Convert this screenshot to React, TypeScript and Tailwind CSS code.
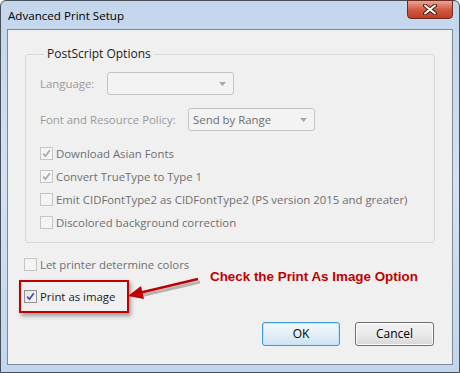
import React from 'react';

const ui = { fontFamily: '"Open Sans", "Noto Sans", sans-serif' };

function Check({ checked, disabled }: { checked?: boolean; disabled?: boolean }) {
  return (
    <div
      className={`w-[13px] h-[13px] border flex items-center justify-center shrink-0 ${
        disabled ? 'border-[#c6c6c6] bg-[#f4f4f4]' : 'border-[#8f8f8f] bg-gradient-to-br from-[#e2e2e2] to-[#fbfbfb]'
      }`}
    >
      {checked && (
        <svg width="9" height="9" viewBox="0 0 9 9">
          <path
            d="M1.2 4.6 L3.4 7.2 L7.8 1.2"
            fill="none"
            stroke={disabled ? '#a9a9a9' : '#3b4fa8'}
            strokeWidth="1.7"
          />
        </svg>
      )}
    </div>
  );
}

function Row({ label, checked, disabled }: { label: string; checked?: boolean; disabled?: boolean }) {
  return (
    <div className="h-[23px] flex items-center gap-[3px] whitespace-nowrap">
      <Check checked={checked} disabled={disabled} />
      <span className={`text-[11.4px] ${disabled ? 'text-[#6f6f6f]' : 'text-[#1b1b1b]'}`}>{label}</span>
    </div>
  );
}

function Select({ value }: { value?: string }) {
  return (
    <div className="w-[127px] h-[23px] border border-[#c4c4c4] rounded-[3px] bg-[#f3f3f3] flex items-center justify-between pl-[4px] pr-[7px]">
      <span className="text-[11.4px] text-[#6d6d6d]">{value}</span>
      <svg width="7" height="4" viewBox="0 0 7 4">
        <path d="M0 0 H7 L3.5 4 Z" fill="#a8a8a8" />
      </svg>
    </div>
  );
}

export default function App() {
  return (
    <div className="w-[460px] h-[373px] bg-white relative overflow-hidden" style={ui}>
      {/* window frame */}
      <div className="w-full h-full rounded-t-[6px] border border-[#474f5a] bg-gradient-to-b from-[#c3d6ec] via-[#d3e1f1] to-[#c2d6ee] flex flex-col px-[6px] pb-[7px]">
        {/* title bar */}
        <div className="h-[28px] flex items-start justify-between">
          <span className="text-[11.6px] text-black mt-[6px] ml-[1px]">Advanced Print Setup</span>
          <div className="w-[46px] h-[19px] mt-[-1px] rounded-b-[4px] border border-[#6b2c22] bg-gradient-to-b from-[#e9a595] via-[#d35a43] to-[#c33b22] flex items-center justify-center">
            <svg width="14" height="11" viewBox="0 0 14 11">
              <path d="M2 1.5 L12 9.5 M12 1.5 L2 9.5" stroke="#4a1b12" strokeWidth="4" strokeLinecap="round" />
              <path d="M2 1.5 L12 9.5 M12 1.5 L2 9.5" stroke="#ffffff" strokeWidth="2" strokeLinecap="round" />
            </svg>
          </div>
        </div>

        {/* client area */}
        <div className="flex-1 border border-[#7d8a99] bg-[#f0f0f0] flex flex-col px-[17px] pt-[15px]">
          <fieldset className="border border-[#d5dadf] rounded-[3px] px-[14px] pb-[8px]">
            <legend className="ml-[4px] px-[3px] text-[12px] text-[#1b1b1b]">PostScript Options</legend>
            <div className="flex items-center mt-[9px]">
              <span className="w-[67px] text-[11.4px] text-[#9a9a9a]">Language:</span>
              <Select />
            </div>
            <div className="flex items-center mt-[13px]">
              <span className="w-[148px] text-[11.4px] text-[#9a9a9a]">Font and Resource Policy:</span>
              <Select value="Send by Range" />
            </div>
            <div className="flex flex-col mt-[11px]">
              <Row label="Download Asian Fonts" checked disabled />
              <Row label="Convert TrueType to Type 1" checked disabled />
              <Row label="Emit CIDFontType2 as CIDFontType2 (PS version 2015 and greater)" disabled />
              <Row label="Discolored background correction" disabled />
            </div>
          </fieldset>

          <div className="flex flex-col mt-[10px] ml-[-1px]">
            <Row label="Let printer determine colors" disabled />
            <div className="h-[9px]" />
            <Row label="Print as image" checked />
          </div>

          <div className="flex justify-end gap-[15px] mt-[14px] mr-[1px]">
            <button className="w-[78px] h-[24px] rounded-[3px] border border-[#3c9bd6] bg-gradient-to-b from-[#f2f9fd] via-[#e4eff7] to-[#cfe3f1] text-[12px] text-black shadow-[inset_0_0_0_1px_#bfe3f8]">
              OK
            </button>
            <button className="w-[79px] h-[24px] rounded-[3px] border border-[#707070] bg-gradient-to-b from-[#f2f2f2] via-[#ebebeb] to-[#d7d7d7] text-[12px] text-black shadow-[inset_0_0_0_1px_#fcfcfc]">
              Cancel
            </button>
          </div>
        </div>
      </div>

      {/* annotation overlay */}
      <div className="absolute left-[19px] top-[280px] w-[110px] h-[33px] border-2 border-[#c00000] shadow-[2px_3px_4px_rgba(0,0,0,0.35)]" />
      <svg className="absolute left-[125px] top-[272px]" width="80" height="32" viewBox="0 0 80 32">
        <line x1="74" y1="8" x2="14" y2="22" stroke="rgba(0,0,0,0.25)" strokeWidth="3" transform="translate(1 2)" />
        <line x1="73" y1="7" x2="14" y2="21" stroke="#c00000" strokeWidth="2.5" />
        <path d="M3 24 L16 14 L19 27 Z" fill="#c00000" />
      </svg>
      <span
        className="absolute left-[210px] top-[267px] text-[13.4px] font-bold text-[#c00000]"
        style={{ fontFamily: '"Liberation Sans", Arial, sans-serif' }}
      >
        Check the Print As Image Option
      </span>
    </div>
  );
}
